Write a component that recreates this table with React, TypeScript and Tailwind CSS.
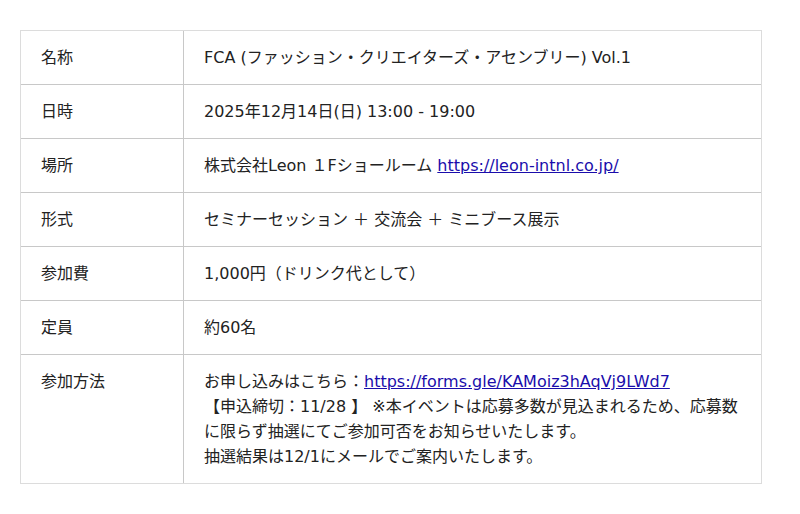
import React from "react";

const rows: { label: string; value: React.ReactNode }[] = [
  { label: "名称", value: "FCA (ファッション・クリエイターズ・アセンブリー) Vol.1" },
  { label: "日時", value: "2025年12月14日(日) 13:00 - 19:00" },
  {
    label: "場所",
    value: (
      <>
        株式会社Leon １Fショールーム{" "}
        <a href="#" className="text-[#1a0dab] underline">https://leon-intnl.co.jp/</a>
      </>
    ),
  },
  { label: "形式", value: "セミナーセッション ＋ 交流会 ＋ ミニブース展示" },
  { label: "参加費", value: "1,000円（ドリンク代として）" },
  { label: "定員", value: "約60名" },
  {
    label: "参加方法",
    value: (
      <>
        お申し込みはこちら：
        <a href="#" className="text-[#1a0dab] underline">https://forms.gle/KAMoiz3hAqVj9LWd7</a>
        <br />
        【申込締切：11/28 】 ※本イベントは応募多数が見込まれるため、応募数に限らず抽選にてご参加可否をお知らせいたします。
        <br />
        抽選結果は12/1にメールでご案内いたします。
      </>
    ),
  },
];

export default function App() {
  return (
    <div
      className="w-[800px] h-[514px] bg-white pt-[30px] pl-[20px]"
      style={{ fontFamily: '"DejaVu Sans", "Noto Sans CJK JP", sans-serif' }}
    >
      <div className="w-[742px] border border-[#dcdcdc] text-[16px] leading-[25px] text-[#222]">
        {rows.map((r, i) => (
          <div key={i} className={`grid grid-cols-[163px_1fr] ${i > 0 ? "border-t border-[#c8c8c8]" : ""}`}>
            <div className="py-[14px] pl-[20px] border-r border-[#c8c8c8]">{r.label}</div>
            <div className="py-[14px] pl-[20px] pr-[20px]">{r.value}</div>
          </div>
        ))}
      </div>
    </div>
  );
}
